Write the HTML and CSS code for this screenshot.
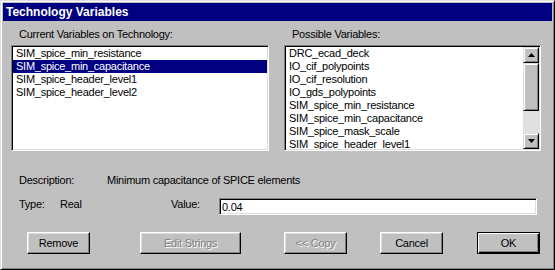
FILE: index.html
```html
<!DOCTYPE html>
<html lang="en">
<head>
    <meta charset="UTF-8">
    <title>Technology Variables</title>
    <link rel="stylesheet" href="styles.css">
</head>
<body>
    <div class="window">
        <div class="titlebar">Technology Variables</div>
        <div class="dialog">
            <div class="lists">
                <div class="list-group current">
                    <div class="group-label">Current Variables on Technology:</div>
                    <ul class="listbox">
                        <li>SIM_spice_min_resistance</li>
                        <li class="selected">SIM_spice_min_capacitance</li>
                        <li>SIM_spice_header_level1</li>
                        <li>SIM_spice_header_level2</li>
                    </ul>
                </div>
                <div class="list-group possible">
                    <div class="group-label">Possible Variables:</div>
                    <div class="listbox scrolled">
                        <ul class="items">
                            <li>DRC_ecad_deck</li>
                            <li>IO_cif_polypoints</li>
                            <li>IO_cif_resolution</li>
                            <li>IO_gds_polypoints</li>
                            <li>SIM_spice_min_resistance</li>
                            <li>SIM_spice_min_capacitance</li>
                            <li>SIM_spice_mask_scale</li>
                            <li>SIM_spice_header_level1</li>
                        </ul>
                        <div class="scrollbar">
                            <div class="scroll-btn">
                                <svg width="7" height="4" viewBox="0 0 7 4"><polygon points="3.5,0 7,4 0,4" fill="#000"/></svg>
                            </div>
                            <div class="scroll-thumb"></div>
                            <div class="scroll-track"></div>
                            <div class="scroll-btn">
                                <svg width="7" height="4" viewBox="0 0 7 4"><polygon points="0,0 7,0 3.5,4" fill="#000"/></svg>
                            </div>
                        </div>
                    </div>
                </div>
            </div>

            <div class="info-row description-row">
                <span class="desc-label">Description:</span>
                <span>Minimum capacitance of SPICE elements</span>
            </div>

            <div class="info-row type-row">
                <span class="type-label">Type:</span>
                <span class="type-value">Real</span>
                <span class="value-label">Value:</span>
                <input type="text" class="value-input" value="0.04">
            </div>

            <div class="button-row">
                <button class="btn btn-remove">Remove</button>
                <button class="btn btn-edit" disabled>Edit Strings</button>
                <button class="btn btn-copy" disabled>&lt;&lt; Copy</button>
                <button class="btn btn-cancel">Cancel</button>
                <button class="btn btn-ok">OK</button>
            </div>
        </div>
    </div>
</body>
</html>
```

FILE: styles.css
```css
body {
    margin: 0;
    padding: 0;
    background-color: #c0c0c0;
    font-family: "Liberation Sans", Arial, sans-serif;
    font-size: 11px;
    letter-spacing: -0.25px;
    color: #000000;
}

.window {
    box-sizing: border-box;
    width: 555px;
    height: 270px;
    padding: 2px;
    background-color: #c0c0c0;
    border: 1px solid;
    border-color: #dfdfdf #000000 #000000 #dfdfdf;
    box-shadow: inset 1px 1px #ffffff, inset -1px -1px #808080;
}

.titlebar {
    height: 18px;
    line-height: 18px;
    padding-left: 3px;
    background-color: #000080;
    color: #ffffff;
    font-size: 12px;
    font-weight: bold;
    letter-spacing: 0;
}

.dialog {
    padding: 7px 11px 0 8px;
}

/* two list boxes side by side */
.lists {
    display: flex;
    gap: 15px;
}

.current {
    width: 258px;
}

.possible {
    width: 257px;
}

.group-label {
    height: 13px;
    line-height: 13px;
    padding-left: 8px;
    margin-bottom: 4px;
    white-space: nowrap;
}

.listbox {
    box-sizing: border-box;
    height: 106px;
    margin: 0;
    padding: 0;
    list-style-type: none;
    background-color: #ffffff;
    border: 1px solid;
    border-color: #808080 #ffffff #ffffff #808080;
    box-shadow: inset 1px 1px #000000, inset -1px -1px #dfdfdf;
    overflow: hidden;
}

.listbox li {
    height: 13px;
    line-height: 13px;
    padding-left: 3px;
    margin-left: 1px;
    margin-right: 1px;
    white-space: nowrap;
}

.listbox > li:first-child,
.items li:first-child {
    margin-top: 1px;
}

.listbox li.selected {
    background-color: #000080;
    color: #ffffff;
}

.scrolled {
    display: flex;
    padding: 1px;
}

.items {
    flex: 1;
    margin: 0;
    padding: 0;
    list-style-type: none;
    overflow: hidden;
}

.items li {
    margin: 0;
}

.items li:first-child {
    margin-top: 0;
}

.scrollbar {
    width: 16px;
    display: flex;
    flex-direction: column;
}

.scroll-btn,
.scroll-thumb {
    box-sizing: border-box;
    background-color: #c0c0c0;
    border: 1px solid;
    border-color: #dfdfdf #000000 #000000 #dfdfdf;
    box-shadow: inset 1px 1px #ffffff, inset -1px -1px #808080;
}

.scroll-btn {
    height: 16px;
    display: flex;
    align-items: center;
    justify-content: center;
}

.scroll-btn svg {
    display: block;
}

.scroll-thumb {
    height: 48px;
}

.scroll-track {
    flex: 1;
    background-color: #e0e0e0;
}

/* description / type rows */
.info-row {
    display: flex;
    align-items: flex-start;
    padding-left: 8px;
    line-height: 13px;
    white-space: nowrap;
}

.description-row {
    margin-top: 23px;
}

.desc-label {
    width: 88px;
}

.type-row {
    margin-top: 11px;
}

.type-label {
    width: 41px;
}

.type-value {
    width: 111px;
}

.value-label {
    width: 48px;
}

.value-input {
    box-sizing: border-box;
    width: 318px;
    height: 17px;
    margin: 0;
    padding: 0 2px;
    font-family: "Liberation Sans", Arial, sans-serif;
    font-size: 11px;
    letter-spacing: -0.25px;
    background-color: #ffffff;
    border: 1px solid;
    border-color: #808080 #ffffff #ffffff #808080;
    box-shadow: inset 1px 1px #000000, inset -1px -1px #dfdfdf;
    outline: none;
}

/* buttons */
.button-row {
    display: flex;
    margin-top: 17px;
}

.btn {
    box-sizing: border-box;
    width: 63px;
    height: 22px;
    margin: 0;
    padding: 0;
    font-family: "Liberation Sans", Arial, sans-serif;
    font-size: 11px;
    letter-spacing: -0.25px;
    color: #000000;
    background-color: #c0c0c0;
    border: 1px solid;
    border-color: #ffffff #000000 #000000 #ffffff;
    box-shadow: inset -1px -1px #808080, inset 1px 1px #dfdfdf;
}

.btn:disabled {
    color: #808080;
    text-shadow: 1px 1px 0 #ffffff;
}

.btn-remove {
    margin-left: 16px;
}

.btn-edit {
    width: 101px;
    margin-left: 50px;
}

.btn-copy {
    margin-left: 43px;
}

.btn-cancel {
    margin-left: 33px;
}

.btn-ok {
    margin-left: 34px;
    border-color: #000000;
    box-shadow: inset 1px 1px #ffffff, inset -1px -1px #000000, inset -2px -2px #808080;
}
```
